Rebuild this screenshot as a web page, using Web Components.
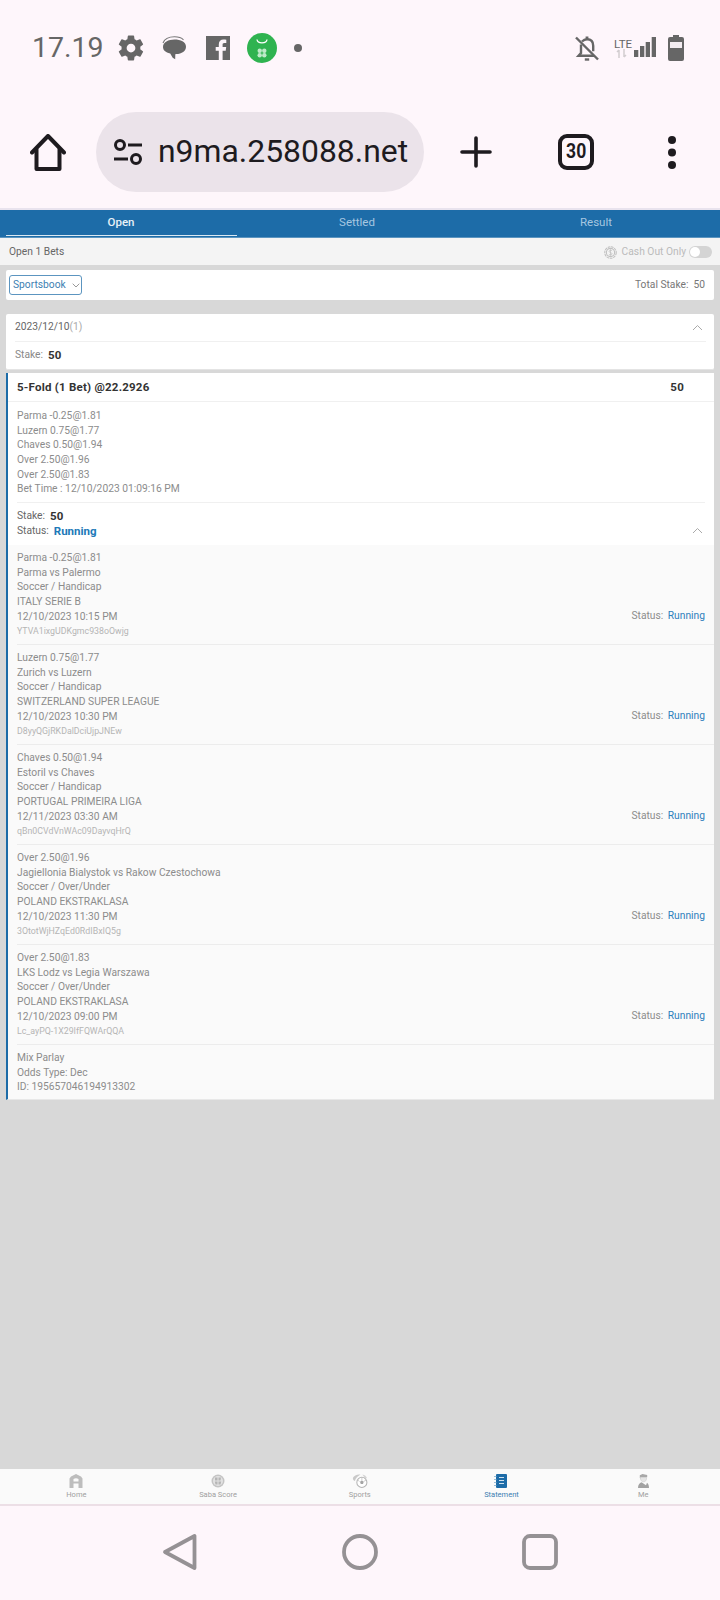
<!DOCTYPE html>
<html lang="en"><head><meta charset="utf-8"><title>Open Bets</title>
<style>
html,body{margin:0;padding:0}
body{width:720px;height:1600px;overflow:hidden;background:#d8d8d8;display:flex;flex-direction:column;font-family:Roboto,"Liberation Sans",sans-serif}
</style></head><body>
<phone-status></phone-status>
<browser-bar url="n9ma.258088.net" tabs="30"></browser-bar>
<bet-tabs></bet-tabs>
<open-bar></open-bar>
<stake-filter></stake-filter>
<date-card></date-card>
<bet-card>
  <bet-leg pick="Parma -0.25@1.81" teams="Parma vs Palermo" market="Soccer / Handicap" league="ITALY SERIE B" time="12/10/2023 10:15 PM" ref="YTVA1ixgUDKgmc938oOwjg"></bet-leg>
  <bet-leg pick="Luzern 0.75@1.77" teams="Zurich vs Luzern" market="Soccer / Handicap" league="SWITZERLAND SUPER LEAGUE" time="12/10/2023 10:30 PM" ref="D8yyQGjRKDalDciUjpJNEw"></bet-leg>
  <bet-leg pick="Chaves 0.50@1.94" teams="Estoril vs Chaves" market="Soccer / Handicap" league="PORTUGAL PRIMEIRA LIGA" time="12/11/2023 03:30 AM" ref="qBn0CVdVnWAc09DayvqHrQ"></bet-leg>
  <bet-leg pick="Over 2.50@1.96" teams="Jagiellonia Bialystok vs Rakow Czestochowa" market="Soccer / Over/Under" league="POLAND EKSTRAKLASA" time="12/10/2023 11:30 PM" ref="3OtotWjHZqEd0RdIBxIQ5g"></bet-leg>
  <bet-leg pick="Over 2.50@1.83" teams="LKS Lodz vs Legia Warszawa" market="Soccer / Over/Under" league="POLAND EKSTRAKLASA" time="12/10/2023 09:00 PM" ref="Lc_ayPQ-1X29IfFQWArQQA"></bet-leg>
</bet-card>
<page-spacer></page-spacer>
<bottom-nav></bottom-nav>
<system-nav></system-nav>
<script>
function def(name, html){
  customElements.define(name, class extends HTMLElement{
    connectedCallback(){
      if(this.shadowRoot) return;
      const r=this.attachShadow({mode:'open'});
      r.innerHTML = typeof html==='function' ? html(this) : html;
    }
  });
}
const chevUp = `<svg width="11" height="7" viewBox="0 0 11 7" fill="none" stroke="#aaa" stroke-width="1"><path d="M1 6l4.500-4.500L10 6"/></svg>`;
def('phone-status',`<style>
:host{display:flex;align-items:center;height:97px;box-sizing:border-box;padding:0 0 1px 32px;background:#fef6fb;flex:none}
.t{font:400 28.500px/1 Roboto,sans-serif;color:#666;width:83.500px;flex:none}
svg{display:block;flex:none}
.r{margin-left:auto;display:flex;align-items:center}
</style>
<span class="t">17.19</span>
<svg width="30" height="30" viewBox="0 0 24 24" fill="#666"><path d="M19.400 13c.05-.33.08-.66.08-1s-.03-.67-.08-1l2.100-1.650c.2-.15.25-.42.120-.64l-2-3.460c-.12-.22-.39-.3-.61-.22l-2.490 1c-.52-.4-1.080-.73-1.690-.98l-.38-2.650A.5.500 0 0 0 13.960 2h-4c-.25 0-.46.18-.49.420l-.38 2.650c-.61.250-1.170.59-1.690.980l-2.490-1a.5.500 0 0 0-.61.220l-2 3.460c-.13.220-.07.490.120.640L4.520 11c-.05.330-.08.670-.08 1s.03.670.08 1l-2.100 1.650c-.2.150-.25.420-.12.640l2 3.460c.12.220.39.300.61.220l2.490-1c.52.400 1.080.730 1.690.980l.38 2.650c.03.240.24.420.49.420h4c.25 0 .46-.18.49-.42l.38-2.650c.61-.25 1.170-.59 1.690-.98l2.490 1c.23.080.49 0 .61-.22l2-3.460c.12-.22.070-.49-.12-.64L19.400 13zM12 15.500a3.500 3.500 0 1 1 0-7 3.500 3.500 0 0 1 0 7z"/></svg>
<svg style="margin-left:16.500px" width="24" height="24" viewBox="0 0 24 24" fill="#666"><path d="M12.500 3.500c6 0 11.500 2.300 11.500 7.200 0 4.300-4.200 7-9.800 7.400l-.9.100-.1 5-2.500-1.500-2.500-4.200C3.500 16.600 1 14 1 11c0-4.800 5.500-7.500 11.500-7.500z"/><path d="M1 7C2.500 3 7 .8 12.500.8c3.500 0 7 1 9 3" fill="none" stroke="#777" stroke-width="1.100"/></svg>
<svg style="margin-left:20px" width="24" height="24" viewBox="0 0 24 24"><rect width="24" height="24" fill="#666"/><path d="M16.600 24v-9.300h3.100l.5-3.600h-3.600V8.800c0-1 .3-1.800 1.800-1.800h1.900V3.800c-.3 0-1.500-.2-2.800-.2-2.800 0-4.700 1.700-4.700 4.800v2.700H9.700v3.600h3.100V24z" fill="#fef6fb"/></svg>
<svg style="margin-left:17px" width="30" height="30" viewBox="0 0 30 30"><circle cx="15" cy="15" r="15" fill="#2fb350"/><path d="M10 6.500c.5 4.500 9.500 4.500 10 0" fill="none" stroke="#fff" stroke-width="1.300"/><g fill="#bfeac9"><circle cx="12.700" cy="17.700" r="2.200"/><circle cx="17.300" cy="17.700" r="2.200"/><circle cx="12.700" cy="22.300" r="2.200"/><circle cx="17.300" cy="22.300" r="2.200"/></g></svg>
<svg style="margin-left:17px" width="8" height="8" viewBox="0 0 8 8"><circle cx="4" cy="4" r="4" fill="#666"/></svg>
<div class="r">
<svg width="24" height="25" viewBox="0 0 24 25" fill="none" stroke="#666" stroke-width="2.400"><path d="M6 8.500V17l-2.500 2.800H19"/><path d="M7 5.500C8.500 4 10 3.300 12 3.300c4 0 6.200 2.500 6.200 6.500v5.500"/><path d="M12 .5v3" stroke-width="2.800"/><path d="M9.800 23.500h4.400"/><path d="M1 1.500l22 22"/></svg>
<svg style="margin-left:15px" width="42" height="22" viewBox="0 0 42 22"><text x="0" y="11" font-family="Roboto,sans-serif" font-size="11.500" fill="#666">LTE</text><path d="M5 13v8M3 15l2-2M10 12v8M10 20l2-2" stroke="#d2cdd0" stroke-width="1.500" fill="none"/><g fill="#666"><rect x="20" y="13" width="4.300" height="7"/><rect x="26" y="9" width="4.300" height="11"/><rect x="31.700" y="5" width="4.300" height="15"/><rect x="37.700" y="0" width="4.300" height="20"/></g></svg>
<svg style="margin:0 36px 0 12px" width="16" height="26" viewBox="0 0 16 26"><path d="M5 0h6v2h3a2 2 0 0 1 2 2v20a2 2 0 0 1-2 2H2a2 2 0 0 1-2-2V4a2 2 0 0 1 2-2h3z" fill="#666"/><rect x="2" y="7" width="12" height="6" fill="#f3ecf1"/></svg>
</div>`);
def('browser-bar',el=>`<style>
:host{display:flex;align-items:center;height:113px;box-sizing:border-box;padding:0 0 1px 30px;background:#fef6fb;border-bottom:2px solid #e9e3ee;flex:none}
.pill{margin-left:30px;width:328px;height:80px;border-radius:40px;background:#ebe3ea;display:flex;align-items:center;box-sizing:border-box;padding-left:17px;flex:none}
.u{font:400 31.900px/1 Roboto,sans-serif;color:#1e1b1f;margin-left:15px;white-space:nowrap}
svg{display:block;flex:none}
.tab{margin-left:66px;width:36px;height:36px;box-sizing:border-box;border:4px solid #1e1b1f;border-radius:9px;display:flex;align-items:center;justify-content:center;font:700 19.500px/1 Roboto,sans-serif;color:#1e1b1f;flex:none}
.tab span{display:block;transform:scaleX(.9)}
</style>
<svg width="36" height="37" viewBox="0 0 36 37" fill="none" stroke="#1e1b1f" stroke-width="4" stroke-linejoin="round" stroke-linecap="round"><path d="M2 18.500L18 2l16 16.500"/><path d="M6.500 15.500V35h23V15.500"/></svg>
<div class="pill"><svg width="30" height="26" viewBox="0 0 30 26" fill="none" stroke="#1e1b1f" stroke-width="3"><circle cx="7" cy="6" r="4.500"/><path d="M15 6h14"/><path d="M1 20h14"/><circle cx="23" cy="20" r="4.500"/></svg><span class="u">${el.getAttribute('url')}</span></div>
<svg style="margin-left:36px" width="32" height="32" viewBox="0 0 32 32" stroke="#1e1b1f" stroke-width="3.600" stroke-linecap="round"><path d="M16 2v28M2 16h28"/></svg>
<div class="tab"><span>${el.getAttribute('tabs')}</span></div>
<svg style="margin-left:74px" width="8" height="33" viewBox="0 0 8 33" fill="#1e1b1f"><circle cx="4" cy="4" r="4"/><circle cx="4" cy="16.500" r="4"/><circle cx="4" cy="29" r="4"/></svg>`);
def('bet-tabs',`<style>
:host{display:grid;grid-template-columns:238px 234px 244px;height:28px;box-sizing:border-box;padding:0 0 0 2px;background:#1d6ca8;flex:none;font:400 11.500px/1 Roboto,sans-serif;color:#a6c7e0;border-bottom:1px solid #5c95c0}
div{display:flex;align-items:center;justify-content:center;position:relative;padding-bottom:2px}
.a{color:#e8f1f7;font-weight:500}
.a::after{content:"";position:absolute;left:4px;right:3px;bottom:1px;height:1.500px;background:#dbe9f3}
</style><div class="a">Open</div><div>Settled</div><div>Result</div>`);
def('open-bar',`<style>
:host{display:flex;align-items:center;height:27px;box-sizing:border-box;padding:1px 8px 0 9px;background:#f4f4f4;flex:none;font:400 10.250px/1 Roboto,sans-serif;color:#666}
.r{margin-left:auto;display:flex;align-items:center;color:#bbb}
.sw{width:23px;height:12px;border-radius:6px;background:#d4d4d4;position:relative;margin-left:3px}
.sw::before{content:"";position:absolute;left:1px;top:1px;width:10px;height:10px;border-radius:50%;background:#fff}
svg{margin-right:5px}
</style><span>Open 1 Bets</span><span class="r"><svg width="13" height="13" viewBox="0 0 12 12" fill="none" stroke="#c0c0c0"><circle cx="6" cy="6" r="5.300" stroke-dasharray="2.500 .6"/><circle cx="6" cy="6" r="3.800"/><path d="M7.500 4.500C7 3.800 4.700 3.700 4.700 5S7.500 6 7.500 7.200 5 8.300 4.500 7.500M6 3v6" stroke-width=".7"/></svg>Cash Out Only<span class="sw"></span></span>`);
def('stake-filter',`<style>
:host{display:flex;align-items:center;height:30px;box-sizing:border-box;margin:5px 6px 14px;padding:0 9px 0 3px;background:#fff;border-radius:2px;flex:none;font:400 10.250px/1 Roboto,sans-serif;color:#777}
.b{display:flex;align-items:center;height:20px;box-sizing:border-box;width:73px;padding-left:3px;border:1px solid #5c95c0;border-radius:3px;color:#3d7fb2}
svg{margin-left:6px}
.r{margin-left:auto}
.r b{font-weight:400;margin-left:5px}
</style><span class="b">Sportsbook<svg width="8" height="5" viewBox="0 0 8 5" fill="none" stroke="#999"><path d="M.7.700L4 4 7.300.700"/></svg></span><span class="r">Total Stake:<b>50</b></span>`);
def('date-card',`<style>
:host{display:block;height:56px;box-sizing:border-box;margin:0 6px 3px;padding:0 8px 0 9px;background:#fff;border-radius:2px;flex:none;font:400 10.250px/1 Roboto,sans-serif;color:#666;border-bottom:1px solid #e4e4e4}
.a{height:27px;display:flex;align-items:center;justify-content:space-between;border-bottom:1px solid #f0f0f0;padding-right:3px}
.a i{font-style:normal;color:#aaa}
.b{height:27px;display:flex;align-items:center;color:#888}
.b b{font-weight:700;font-size:11.500px;color:#333;margin-left:5px}
</style><div class="a"><span>2023/12/10<i>(1)</i></span>${chevUp}</div><div class="b">Stake:<b>50</b></div>`);
def('bet-card',`<style>
:host{display:block;box-sizing:border-box;margin:0 6px;background:#fff;border-left:2px solid #1d6ca8;flex:none;font:400 10.250px/14.650px Roboto,sans-serif;color:#8c8c8c;border-bottom:1px solid #e8e8e8}
.h{height:29px;margin:0;padding:2px 30px 0 9px;box-sizing:border-box;display:flex;align-items:center;justify-content:space-between;font:700 11.500px/1 Roboto,sans-serif;color:#333;letter-spacing:.23px;border-bottom:1px solid #f0f0f0}
.s{margin:0 9px;padding:7px 0 6px;border-bottom:1px solid #f0f0f0;height:87px;box-sizing:content-box;}
.t{padding:0 8px 0 9px;height:42px;box-sizing:border-box;display:flex;flex-direction:column;justify-content:center;color:#666;position:relative}
.t div{display:flex;align-items:center}
.t b{font-weight:700;font-size:11.500px;color:#333;margin-left:5px}
.t b.r{color:#2079b8}
.t svg{position:absolute;right:11px;top:24px}
.f{padding:6px 9px 0;background:#fafafa;height:54px;box-sizing:border-box}
</style>
<div class="h"><span>5-Fold (1 Bet) @22.2926</span><span>50</span></div>
<div class="s">Parma -0.25@1.81<br>Luzern 0.75@1.77<br>Chaves 0.50@1.94<br>Over 2.50@1.96<br>Over 2.50@1.83<br>Bet Time : 12/10/2023 01:09:16 PM</div>
<div class="t"><div>Stake:<b>50</b></div><div>Status:<b class="r">Running</b></div>${chevUp}</div>
<slot></slot>
<div class="f">Mix Parlay<br>Odds Type: Dec<br>ID: 195657046194913302</div>`);
def('bet-leg',el=>{const a=n=>el.getAttribute(n);return `<style>
:host{display:block;height:100px;box-sizing:border-box;padding:6px 9px 0;background:#fafafa;position:relative}
:host::after{content:"";position:absolute;left:9px;right:0;bottom:0;height:1px;background:#ececec}
.c{font-size:8.800px;color:#b5b5b5;line-height:14.650px}
.st{position:absolute;right:9px;top:64px;color:#8c8c8c}
.st em{font-style:normal;color:#2d7fbc;margin-left:2px}
</style><div>${a('pick')}</div><div>${a('teams')}</div><div>${a('market')}</div><div>${a('league')}</div><div>${a('time')}</div><div class="c">${a('ref')}</div><div class="st">Status: <em>Running</em></div>`});
def('page-spacer',`<style>:host{display:block;flex:1;background:#d8d8d8}</style>`);
const navItem=(svg,label,on)=>`<div class="i${on?' on':''}">${svg}<span>${label}</span></div>`;
def('bottom-nav',`<style>
:host{display:grid;grid-template-columns:repeat(5,1fr);height:37px;box-sizing:border-box;padding:0 6px 0 5.500px;background:#fafafa;border-bottom:2px solid #ecdfe6;flex:none;font:400 7.500px/1 Roboto,sans-serif;color:#a0a0a0}
.i{display:flex;flex-direction:column;align-items:center;padding-top:5px}
.i svg{display:block;margin-bottom:3px}
.on{color:#3d7fb2}
</style>`+
navItem(`<svg width="14" height="14" viewBox="0 0 14 14" fill="#bdbdbd"><path d="M7 0l5 2.500 1.500 2V14H9.500V9.500h-5V14H.500V4.500l1.500-2zM4.500 5v2.500h5V5c-1.500-1-3.500-1-5 0z"/></svg>`,'Home')+
navItem(`<svg width="14" height="14" viewBox="0 0 14 14"><circle cx="7" cy="7" r="6.500" fill="#c4c4c4"/><circle cx="7" cy="7" r="5" fill="#e2e2e2"/><path d="M4 3.500h2.500v3H4zM7.500 3.500H10l-.5 3h-2zM3.800 7.500h2.700v3H4.500zM7.500 7.500h2.700l-.7 3h-2z" fill="#b5b5b5"/></svg>`,'Saba Score')+
navItem(`<svg width="16" height="14" viewBox="0 0 17 15"><path d="M1 4C2 1.500 5.500 0 9 .5 6.500 2 4 4 3 7.500 1.500 7 .5 5.500 1 4z" fill="#c9c9c9"/><path d="M11 .6c2.500.5 4.500 2 5 4l-2 .3z" fill="#d5d5d5"/><circle cx="10.500" cy="9" r="5.400" fill="#fff" stroke="#b5b5b5" stroke-width="1.100"/><path d="M10.500 7l2 1.400-.8 2.300H9.300l-.8-2.300z" fill="#a5a5a5"/><path d="M6 6.500l2 1.500M15 6.500L12.500 8M10.500 3.600V7" stroke="#bdbdbd" stroke-width=".8"/></svg>`,'Sports')+
navItem(`<svg width="14" height="14" viewBox="0 0 14 14"><rect x="2" y="0" width="11" height="14" rx="1" fill="#1d6ca8"/><path d="M5 3.500h5M5 6.500h5M5 9.500h5" stroke="#cfe1ee" stroke-width="1"/><path d="M0 2.500h2.500M0 5.500h2.500M0 8.500h2.500M0 11.500h2.500" stroke="#7fadcf" stroke-width=".8"/></svg>`,'Statement',true)+
navItem(`<svg width="11" height="14" viewBox="0 0 11 14"><path d="M1.800 1.200L4.500 0l4.700 1v2.200H2.500v1.500L1.800 4z" fill="#a8a8a8"/><path d="M2.500 3.500h6V5C8 7 7 7.800 5.500 7.800S3 7 2.500 5z" fill="#e5e5e5" stroke="#c4c4c4" stroke-width=".5"/><path d="M0 14c0-3.300 1.500-5 3.500-5.700l4.500 3 1-2.600c1 .8 2 2 2 5.300z" fill="#a2a2a2"/></svg>`,'Me'));
def('system-nav',`<style>
:host{display:flex;align-items:center;height:94px;box-sizing:border-box;padding:0 0 2px 162px;background:#fef6fb;flex:none}
svg{display:block;flex:none}
</style>
<svg width="35" height="38" viewBox="0 0 35 38" fill="none" stroke="#959194" stroke-width="3.800" stroke-linejoin="round"><path d="M32.500 3v32L3 19z"/></svg>
<svg style="margin-left:145px" width="36" height="36" viewBox="0 0 36 36" fill="none" stroke="#959194" stroke-width="3.800"><circle cx="18" cy="18" r="16"/></svg>
<svg style="margin-left:144px" width="36" height="36" viewBox="0 0 36 36" fill="none" stroke="#959194" stroke-width="3.800"><rect x="2" y="2" width="32" height="32" rx="6"/></svg>`);
</script>
</body></html>
